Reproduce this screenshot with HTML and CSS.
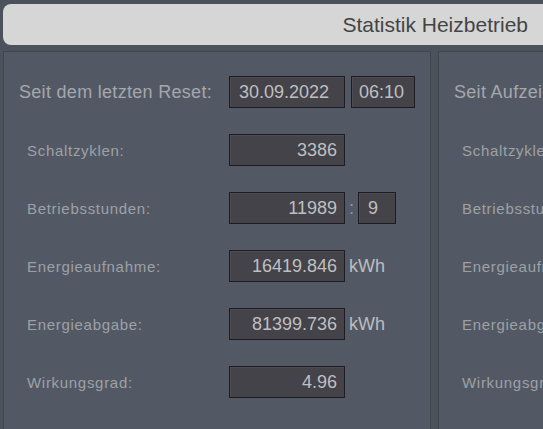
FILE: index.html
```html
<!DOCTYPE html>
<html lang="de">
<head>
<meta charset="utf-8">
<title>Statistik Heizbetrieb</title>
<link rel="stylesheet" href="styles.css">
</head>
<body>
<div class="screen">
  <header class="title-bar"><span class="title">Statistik Heizbetrieb</span></header>
  <div class="panels">
    <section class="panel">
      <div class="row">
        <span class="label head-label">Seit dem letzten Reset:</span>
        <span class="field field-date">30.09.2022</span>
        <span class="field field-time">06:10</span>
      </div>
      <div class="row">
        <span class="label">Schaltzyklen:</span>
        <span class="field field-num">3386</span>
      </div>
      <div class="row">
        <span class="label">Betriebsstunden:</span>
        <span class="field field-num">11989</span>
        <span class="sep">:</span>
        <span class="field field-small">9</span>
      </div>
      <div class="row">
        <span class="label">Energieaufnahme:</span>
        <span class="field field-num">16419.846</span>
        <span class="unit">kWh</span>
      </div>
      <div class="row">
        <span class="label">Energieabgabe:</span>
        <span class="field field-num">81399.736</span>
        <span class="unit">kWh</span>
      </div>
      <div class="row">
        <span class="label">Wirkungsgrad:</span>
        <span class="field field-num">4.96</span>
      </div>
    </section>
    <section class="panel">
      <div class="row">
        <span class="label head-label">Seit Aufzeichnungsbeginn:</span>
      </div>
      <div class="row">
        <span class="label">Schaltzyklen:</span>
      </div>
      <div class="row">
        <span class="label">Betriebsstunden:</span>
      </div>
      <div class="row">
        <span class="label">Energieaufnahme:</span>
      </div>
      <div class="row">
        <span class="label">Energieabgabe:</span>
      </div>
      <div class="row">
        <span class="label">Wirkungsgrad:</span>
      </div>
    </section>
  </div>
</div>
</body>
</html>
```

FILE: styles.css
```css
html, body {
  margin: 0;
  height: 100%;
  overflow: hidden;
  background: #4c525c;
  font-family: "Liberation Sans", Arial, sans-serif;
}

.screen {
  padding: 4px 0 0 3px;
  width: 900px;
}

.title-bar {
  box-sizing: border-box;
  width: 540px;
  height: 41px;
  background: #d6d6d6;
  border-radius: 8px 0 0 8px;
  display: flex;
  align-items: center;
  justify-content: flex-end;
  padding-right: 15px;
}

.title {
  font-size: 21px;
  color: #444;
}

.panels {
  display: flex;
  gap: 7px;
  margin-top: 6px;
}

.panel {
  flex: 0 0 428px;
  box-sizing: border-box;
  height: 420px;
  border: 1px solid #40454e;
  background: #535964;
  padding: 24px 0 0 15px;
  overflow: hidden;
}

.row {
  display: flex;
  align-items: center;
  height: 32px;
  margin-bottom: 26px;
  white-space: nowrap;
}

.label {
  flex: none;
  box-sizing: border-box;
  width: 210px;
  padding-left: 8px;
  font-size: 15px;
  letter-spacing: 0.7px;
  color: #9da1a6;
}

.head-label {
  padding-left: 0;
  font-size: 18px;
  letter-spacing: 0.3px;
  color: #a4a7ac;
}

.field {
  flex: none;
  box-sizing: border-box;
  height: 32px;
  border: 1px solid #1d1d21;
  background: #444349;
  box-shadow: inset 1px 1px 0 #4d4c53;
  color: #bfbfc1;
  font-size: 18px;
  display: flex;
  align-items: center;
  padding: 0 7px 0 9px;
}

.field-date {
  width: 116px;
}

.field-time {
  width: 64px;
  margin-left: 6px;
  padding-left: 7px;
}

.field-num {
  width: 116px;
  justify-content: flex-end;
}

.field-small {
  width: 38px;
}

.sep {
  flex: none;
  width: 13px;
  text-align: center;
  font-size: 18px;
  color: #969aa0;
}

.unit {
  margin-left: 4px;
  font-size: 18px;
  color: #bcbdc0;
}
```
